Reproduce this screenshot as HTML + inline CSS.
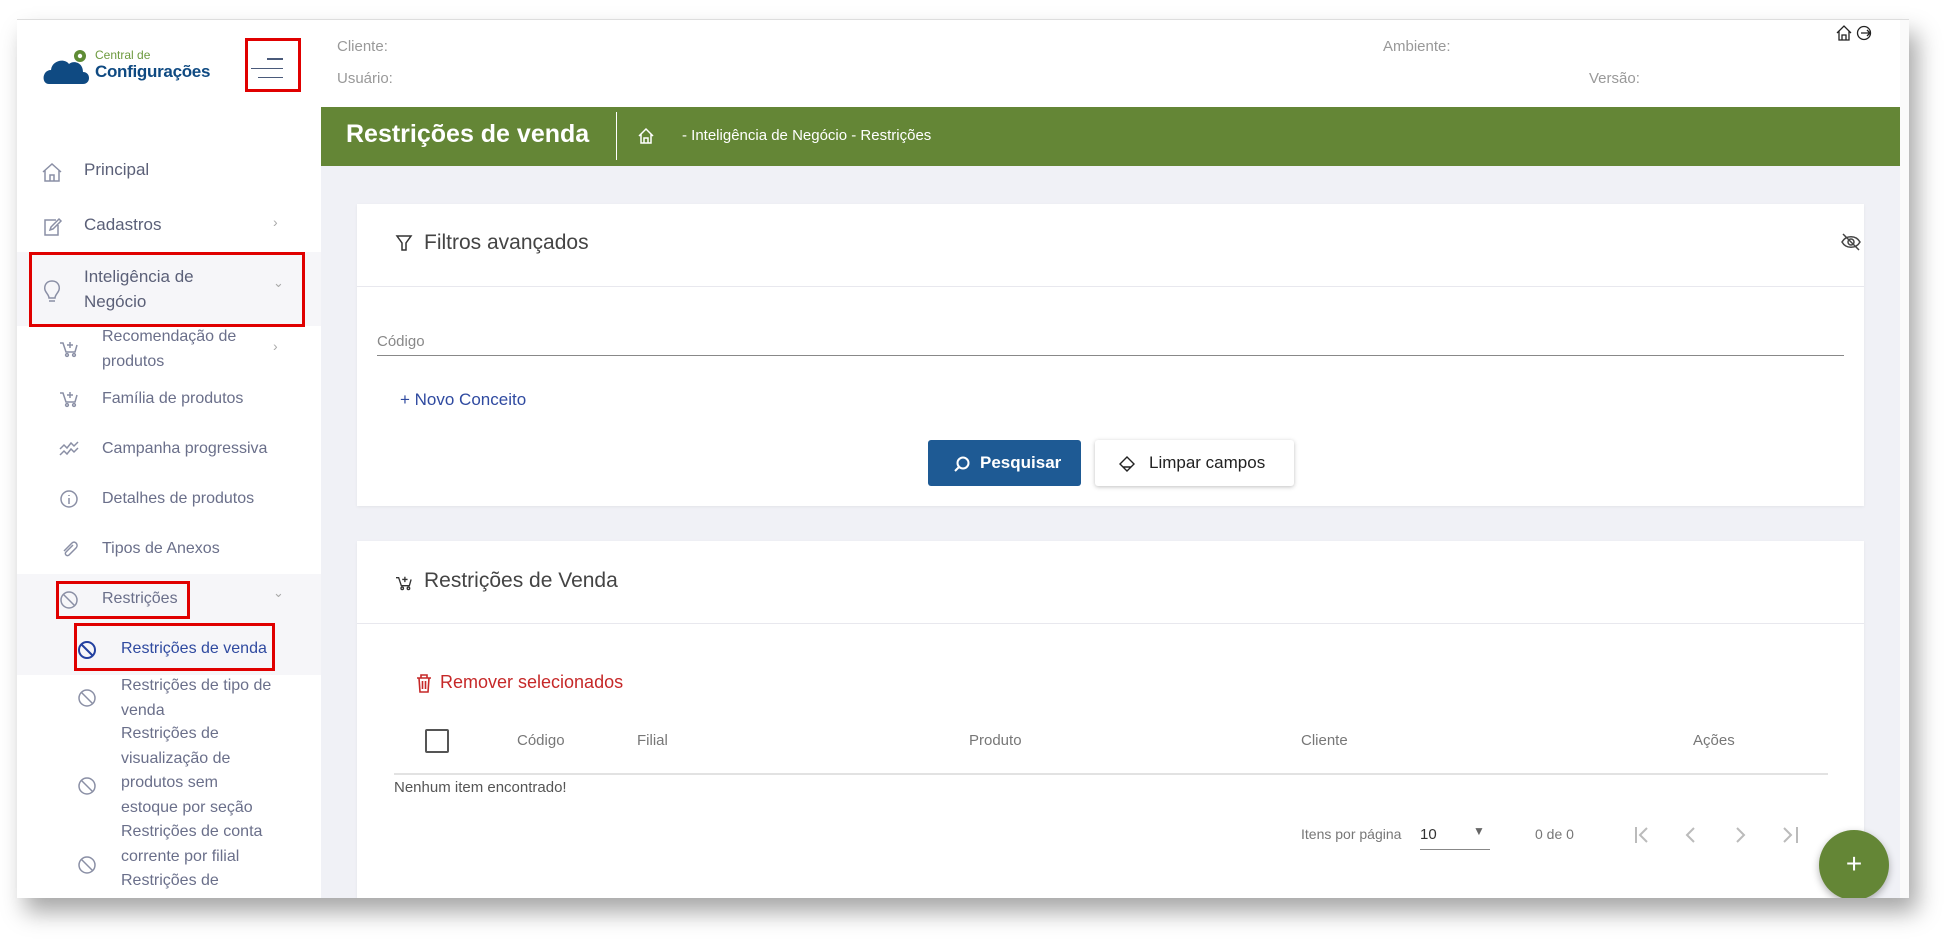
<!DOCTYPE html>
<html><head><meta charset="utf-8"><style>
*{margin:0;padding:0;box-sizing:border-box}
body{width:1959px;height:947px;background:#fff;font-family:"Liberation Sans",sans-serif;position:relative;overflow:hidden;color:#444}
.a{position:absolute}
#frame{left:17px;top:19px;width:1892px;height:879px;background:#fff;box-shadow:8px 14px 22px rgba(0,0,0,.35);border-top:1px solid #ddd;overflow:hidden}
.t{position:absolute;white-space:nowrap}
.side{color:#5b6078;font-size:17px}
.sub{color:#6a6f8a;font-size:16px;line-height:24.5px}
.rb{position:absolute;border:3px solid #e00000}
.card{position:absolute;background:#fff;box-shadow:0 1px 3px rgba(0,0,0,.06)}
.ic{position:absolute;fill:none;stroke:#8a8fa5;stroke-width:1.5}
</style></head><body>
<div id="frame" class="a">
 <div class="a" style="left:0;top:0;width:1892px;height:87px;background:#fff;box-shadow:0 2px 4px rgba(0,0,0,.05)"></div>
 <svg class="a" style="left:26px;top:24px" width="50" height="42" viewBox="0 0 50 42"><path d="M6 40 C-2 40 -1 26 8 26 C9 16 22 14 26 20 C30 16 40 18 40 28 C48 28 48 40 40 40 Z" fill="#0f4a82"/><circle cx="37" cy="12" r="6" fill="#5f8c35"/><circle cx="37" cy="12" r="2.2" fill="#fff"/></svg>
 <div class="t" style="left:78px;top:28px;font-size:12px;color:#6d9a3e">Central de</div>
 <div class="t" style="left:78px;top:42px;font-size:17px;font-weight:bold;color:#0f4a82;letter-spacing:-0.3px">Configurações</div>
 <div class="rb" style="left:228px;top:18px;width:56px;height:54px"></div>
 <div class="a" style="left:250px;top:38px;width:16px;height:2px;background:#4a5a7a"></div>
 <div class="a" style="left:234px;top:48px;width:32px;height:1px;background:#4a5a7a"></div>
 <div class="a" style="left:241px;top:57px;width:25px;height:1px;background:#4a5a7a"></div>
 <div class="t" style="left:320px;top:18px;font-size:15px;color:#999">Cliente:</div>
 <div class="t" style="left:320px;top:50px;font-size:15px;color:#999">Usuário:</div>
 <div class="t" style="left:1366px;top:18px;font-size:15px;color:#999">Ambiente:</div>
 <div class="t" style="left:1572px;top:50px;font-size:15px;color:#999">Versão:</div>
 <svg class="a" style="left:1818px;top:4px" width="40" height="18" viewBox="0 0 40 18"><path d="M2 9 L9 2 L16 9 M4 7 V16 H14 V7 M7 16 V11 H11 V16" fill="none" stroke="#222" stroke-width="1.3"/><circle cx="29" cy="9" r="6.5" fill="none" stroke="#222" stroke-width="1.3"/><path d="M26 9 H35 M32 6 L35 9 L32 12" fill="none" stroke="#222" stroke-width="1.3"/></svg>

 <div class="a" style="left:0;top:87px;width:304px;height:792px;background:#fff"></div>
 <div class="a" style="left:0;top:232px;width:304px;height:74px;background:#f6f6f9"></div>
 <div class="a" style="left:0;top:554px;width:304px;height:101px;background:#f6f6f9"></div>
 <svg class="ic" style="left:24px;top:141px" width="22" height="22" viewBox="0 0 22 22"><path d="M2 11 L11 3 L20 11 M4 9 V20 H18 V9 M9 20 V14 H13 V20"/></svg>
 <div class="t side" style="left:67px;top:140px">Principal</div>
 <svg class="ic" style="left:24px;top:196px" width="22" height="22" viewBox="0 0 22 22"><path d="M15 4 H4 V19 H17 V9 M9 14 L10 11 L18 3 L20 5 L12 13 Z"/></svg>
 <div class="t side" style="left:67px;top:195px">Cadastros</div>
 <div class="t" style="left:256px;top:194px;color:#aaa;font-size:14px">›</div>
 <svg class="ic" style="left:24px;top:258px" width="22" height="28" viewBox="0 0 22 28"><path d="M11 3 C5 3 3 8 4 12 C5 15 8 17 8 20 H14 C14 17 17 15 18 12 C19 8 17 3 11 3 Z M8 23 H14"/></svg>
 <div class="t side" style="left:67px;top:244px;line-height:25px">Inteligência de<br>Negócio</div>
 <div class="t" style="left:256px;top:255px;color:#aaa;font-size:13px">⌄</div>
 <div class="rb" style="left:12px;top:232px;width:276px;height:75px"></div>
 <svg class="ic" style="left:42px;top:320px" width="20" height="18" viewBox="0 0 20 18"><path d="M1 3 H4 L7 12 H16 L18 5 M11 2 V8 M8 5 H14"/><circle cx="8" cy="15" r="1.4"/><circle cx="15" cy="15" r="1.4"/></svg>
 <div class="t sub" style="left:85px;top:305px">Recomendação de<br>produtos</div>
 <div class="t" style="left:256px;top:318px;color:#aaa;font-size:14px">›</div>
 <svg class="ic" style="left:42px;top:370px" width="20" height="18" viewBox="0 0 20 18"><path d="M1 3 H4 L7 12 H16 L18 5 M11 2 V8 M8 5 H14"/><circle cx="8" cy="15" r="1.4"/><circle cx="15" cy="15" r="1.4"/></svg>
 <div class="t sub" style="left:85px;top:367px">Família de produtos</div>
 <svg class="ic" style="left:42px;top:420px" width="20" height="18" viewBox="0 0 20 18"><path d="M1 9 L5 5 L8 8 L12 3 L15 6 L19 2 M1 15 L5 11 L8 14 L12 9 L15 12 L19 8"/></svg>
 <div class="t sub" style="left:85px;top:417px">Campanha progressiva</div>
 <svg class="ic" style="left:42px;top:469px" width="20" height="20" viewBox="0 0 20 20"><circle cx="10" cy="10" r="8"/><path d="M10 9 V15 M10 6 V7"/></svg>
 <div class="t sub" style="left:85px;top:467px">Detalhes de produtos</div>
 <svg class="ic" style="left:42px;top:519px" width="20" height="20" viewBox="0 0 20 20"><path d="M14 6 L7 13 C5 15 8 18 10 16 L17 9 C20 6 16 1 13 4 L5 12"/></svg>
 <div class="t sub" style="left:85px;top:517px">Tipos de Anexos</div>
 <svg class="ic" style="left:42px;top:570px" width="20" height="20" viewBox="0 0 20 20"><circle cx="10" cy="10" r="8"/><path d="M4 4 L16 16"/></svg>
 <div class="t sub" style="left:85px;top:567px">Restrições</div>
 <div class="t" style="left:256px;top:565px;color:#aaa;font-size:13px">⌄</div>
 <div class="rb" style="left:39px;top:561px;width:134px;height:38px"></div>
 <svg class="ic" style="left:60px;top:620px;stroke:#2340a0;stroke-width:2" width="20" height="20" viewBox="0 0 20 20"><circle cx="10" cy="10" r="8"/><path d="M4 4 L16 16"/></svg>
 <div class="t sub" style="left:104px;top:617px;color:#2f4aa0">Restrições de venda</div>
 <div class="rb" style="left:57px;top:603px;width:201px;height:48px"></div>
 <svg class="ic" style="left:60px;top:668px" width="20" height="20" viewBox="0 0 20 20"><circle cx="10" cy="10" r="8"/><path d="M4 4 L16 16"/></svg>
 <div class="t sub" style="left:104px;top:654px">Restrições de tipo de<br>venda</div>
 <svg class="ic" style="left:60px;top:756px" width="20" height="20" viewBox="0 0 20 20"><circle cx="10" cy="10" r="8"/><path d="M4 4 L16 16"/></svg>
 <div class="t sub" style="left:104px;top:702px">Restrições de<br>visualização de<br>produtos sem<br>estoque por seção</div>
 <svg class="ic" style="left:60px;top:835px" width="20" height="20" viewBox="0 0 20 20"><circle cx="10" cy="10" r="8"/><path d="M4 4 L16 16"/></svg>
 <div class="t sub" style="left:104px;top:800px">Restrições de conta<br>corrente por filial</div>
 <div class="t sub" style="left:104px;top:849px">Restrições de</div>

 <div class="a" style="left:304px;top:87px;width:1588px;height:792px;background:#f0f1f6"></div>
 <div class="a" style="left:1883px;top:0;width:9px;height:879px;background:#fafafa"></div>
 <div class="a" style="left:304px;top:87px;width:1579px;height:59px;background:#648636"></div>
 <div class="t" style="left:329px;top:100px;font-size:25px;color:#fff;font-weight:bold">Restrições de venda</div>
 <div class="a" style="left:599px;top:92px;width:1px;height:48px;background:#fff"></div>
 <svg class="a" style="left:620px;top:107px" width="18" height="18" viewBox="0 0 18 18"><path d="M2 9 L9 2 L16 9 M4 7 V16 H14 V7 M7 16 V11 H11 V16" fill="none" stroke="#fff" stroke-width="1.5"/></svg>
 <div class="t" style="left:665px;top:107px;font-size:15px;color:#fff">- Inteligência de Negócio - Restrições</div>

 <div class="card" style="left:340px;top:184px;width:1507px;height:302px">
  <svg class="ic" style="left:38px;top:30px;stroke:#333" width="18" height="18" viewBox="0 0 18 18"><path d="M2 2 H16 L11 9 V16 H7 V9 Z"/></svg>
  <div class="t" style="left:67px;top:27px;font-size:21px;color:#444">Filtros avançados</div>
  <svg class="ic" style="left:1483px;top:28px;stroke:#444" width="22" height="20" viewBox="0 0 22 20"><path d="M2 10 C6 3 16 3 20 10 C16 17 6 17 2 10 Z M3 2 L19 18"/><circle cx="11" cy="10" r="3"/></svg>
  <div class="a" style="left:0;top:82px;width:1507px;height:1px;background:#e8e8ee"></div>
  <div class="t" style="left:20px;top:129px;font-size:15px;color:#888">Código</div>
  <div class="a" style="left:20px;top:151px;width:1467px;height:1px;background:#888"></div>
  <div class="t" style="left:43px;top:186px;font-size:17px;color:#2f4aa0">+ Novo Conceito</div>
  <div class="a" style="left:571px;top:236px;width:153px;height:46px;background:#1e5a94;border-radius:3px;color:#fff;font-size:17px;font-weight:bold;line-height:46px;padding-left:52px">Pesquisar</div>
  <svg class="a" style="left:596px;top:251px" width="18" height="18" viewBox="0 0 18 18"><circle cx="10" cy="8" r="5.5" fill="none" stroke="#fff" stroke-width="2"/><path d="M6 12 L2 16" stroke="#fff" stroke-width="2"/></svg>
  <div class="a" style="left:738px;top:236px;width:199px;height:46px;background:#fff;border-radius:3px;box-shadow:0 1px 4px rgba(0,0,0,.25);color:#222;font-size:17px;line-height:46px;padding-left:54px">Limpar campos</div>
  <svg class="a" style="left:761px;top:251px" width="18" height="18" viewBox="0 0 18 18"><path d="M9 2 L16 9 L9 16 L2 9 Z M5 12 L13 12" fill="none" stroke="#222" stroke-width="1.4"/></svg>
 </div>

 <div class="card" style="left:340px;top:521px;width:1507px;height:370px">
  <svg class="ic" style="left:38px;top:34px;stroke:#333" width="18" height="16" viewBox="0 0 20 18"><path d="M1 3 H4 L7 12 H16 L18 5 M11 2 V8 M8 5 H14"/><circle cx="8" cy="15" r="1.4"/><circle cx="15" cy="15" r="1.4"/></svg>
  <div class="t" style="left:67px;top:28px;font-size:21px;color:#444">Restrições de Venda</div>
  <div class="a" style="left:0;top:82px;width:1507px;height:1px;background:#e8e8ee"></div>
  <svg class="a" style="left:59px;top:133px" width="16" height="19" viewBox="0 0 16 19"><path d="M1 4 H15 M5 4 V1 H11 V4 M3 4 L4 18 H12 L13 4 M6.5 7 V15 M9.5 7 V15" fill="none" stroke="#c62828" stroke-width="1.6"/></svg>
  <div class="t" style="left:83px;top:131px;font-size:18px;color:#c62828">Remover selecionados</div>
  <div class="a" style="left:68px;top:188px;width:24px;height:24px;border:2px solid #555;border-radius:2px"></div>
  <div class="t" style="left:160px;top:191px;font-size:15px;color:#777">Código</div>
  <div class="t" style="left:280px;top:191px;font-size:15px;color:#777">Filial</div>
  <div class="t" style="left:612px;top:191px;font-size:15px;color:#777">Produto</div>
  <div class="t" style="left:944px;top:191px;font-size:15px;color:#777">Cliente</div>
  <div class="t" style="left:1336px;top:191px;font-size:15px;color:#777">Ações</div>
  <div class="a" style="left:37px;top:232px;width:1434px;height:2px;background:#e2e2e2"></div>
  <div class="t" style="left:37px;top:238px;font-size:15px;color:#555">Nenhum item encontrado!</div>
  <div class="t" style="left:944px;top:285px;font-size:14px;color:#777">Itens por página</div>
  <div class="t" style="left:1063px;top:285px;font-size:15px;color:#333">10</div>
  <div class="t" style="left:1116px;top:283px;font-size:12px;color:#666">▼</div>
  <div class="a" style="left:1063px;top:308px;width:70px;height:1px;background:#888"></div>
  <div class="t" style="left:1178px;top:285px;font-size:14px;color:#777">0 de 0</div>
  <svg class="a" style="left:1277px;top:284px" width="170" height="20" viewBox="0 0 170 20"><g fill="none" stroke="#bbb" stroke-width="2"><path d="M2 2 V18 M13 3 L6 10 L13 17"/><path d="M60 3 L53 10 L60 17"/><path d="M103 3 L110 10 L103 17"/><path d="M150 3 L157 10 L150 17 M163 2 V18"/></g></svg>
 </div>
 <div class="a" style="left:1802px;top:810px;width:70px;height:70px;border-radius:50%;background:#648636;box-shadow:0 3px 8px rgba(0,0,0,.3);color:#fff;font-size:28px;text-align:center;line-height:68px">+</div>
</div>
</body></html>
